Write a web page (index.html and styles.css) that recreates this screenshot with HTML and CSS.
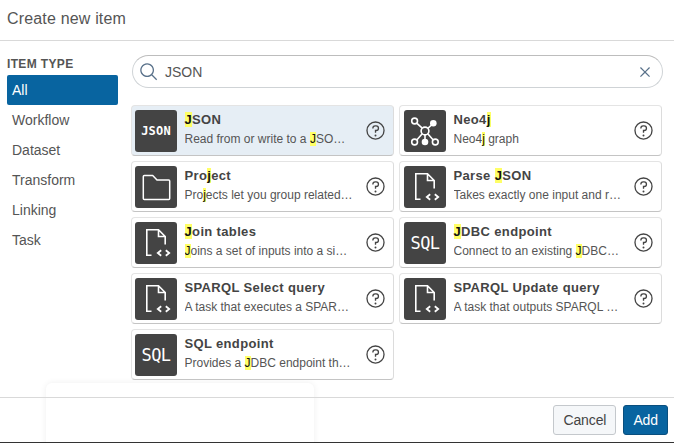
FILE: index.html
```html
<!DOCTYPE html>
<html lang="en">
<head>
<meta charset="utf-8">
<title>Create new item</title>
<link rel="stylesheet" href="styles.css">
</head>
<body>
<svg class="defs" width="0" height="0" aria-hidden="true">
  <symbol id="help" viewBox="0 0 32 32"><path d="M16,2A14,14,0,1,0,30,16,14,14,0,0,0,16,2Zm0,26A12,12,0,1,1,28,16,12,12,0,0,1,16,28Z"/><circle cx="16" cy="23.5" r="1.5"/><path d="M17,8H15.5A4.49,4.49,0,0,0,11,12.5V13h2v-.5A2.5,2.5,0,0,1,15.5,10H17a2.5,2.5,0,0,1,0,5H15v4.5h2V17a4.5,4.5,0,0,0,0-9Z"/></symbol>
  <symbol id="doc" viewBox="0 0 42 42"><path fill="none" stroke="#fff" stroke-width="1.6" d="M16.5 33.2H11.8V7.8H23.5L30.2 14.5V22.5M23.5 7.8V14.5H30.2"/><path fill="none" stroke="#fff" stroke-width="1.8" d="M26.2 28.2 22.8 31 26.2 33.8M30.8 28.2 34.2 31 30.8 33.8"/></symbol>
  <symbol id="folder" viewBox="0 0 42 42"><path fill="none" stroke="#fff" stroke-width="1.5" stroke-linejoin="round" d="M8.3 10.5Q8.3 9.5 9.3 9.5H17.7L22 14H33.7Q34.7 14 34.7 15V32.5Q34.7 33.5 33.7 33.5H9.3Q8.3 33.5 8.3 32.5Z"/></symbol>
  <symbol id="graph" viewBox="0 0 42 42"><g fill="none" stroke="#fff" stroke-width="1.6"><path d="M13 13.3 18.2 18.2M27.6 15 23.8 18.4M18.2 23.8 12.8 30M23.8 23.8 29.2 30M21 25V32"/><circle cx="21" cy="21" r="3.9"/><circle cx="10.6" cy="11" r="2.9"/><circle cx="10.6" cy="32" r="2.9"/><circle cx="31.3" cy="32" r="2.9"/></g><circle cx="29.3" cy="13.3" r="3.3" fill="#fff"/><circle cx="21" cy="32" r="3.3" fill="#fff"/></symbol>
</svg>
<div class="ghost"></div>
<div class="dialog">
  <header class="head">Create new item</header>
  <div class="body">
    <aside class="side">
      <div class="side-title">ITEM TYPE</div>
      <div class="side-item active">All</div>
      <div class="side-item">Workflow</div>
      <div class="side-item">Dataset</div>
      <div class="side-item">Transform</div>
      <div class="side-item">Linking</div>
      <div class="side-item">Task</div>
    </aside>
    <main class="main">
      <div class="search">
        <svg class="search-ico" viewBox="0 0 32 32"><path d="M29,27.5859l-7.5521-7.5521a11.0177,11.0177,0,1,0-1.4141,1.4141L27.5859,29ZM4,13a9,9,0,1,1,9,9A9.01,9.01,0,0,1,4,13Z"/></svg>
        <span class="search-text">JSON</span>
        <svg class="clear-ico" viewBox="0 0 32 32"><path d="M24 9.4L22.6 8 16 14.6 9.4 8 8 9.4 14.6 16 8 22.6 9.4 24 16 17.4 22.6 24 24 22.6 17.4 16 24 9.4z"/></svg>
      </div>
      <div class="grid">
        <div class="card selected">
          <div class="tile"><span class="tile-json">JSON</span></div>
          <div class="info"><div class="name"><mark>J</mark>SON</div><div class="desc">Read from or write to a <mark>J</mark>SO…</div></div>
          <svg class="help"><use href="#help"/></svg>
        </div>
        <div class="card">
          <div class="tile"><svg class="tile-ico"><use href="#graph"/></svg></div>
          <div class="info"><div class="name">Neo4<mark>j</mark></div><div class="desc">Neo4<mark>j</mark> graph</div></div>
          <svg class="help"><use href="#help"/></svg>
        </div>
        <div class="card">
          <div class="tile"><svg class="tile-ico"><use href="#folder"/></svg></div>
          <div class="info"><div class="name">Pro<mark>j</mark>ect</div><div class="desc">Pro<mark>j</mark>ects let you group related…</div></div>
          <svg class="help"><use href="#help"/></svg>
        </div>
        <div class="card">
          <div class="tile"><svg class="tile-ico"><use href="#doc"/></svg></div>
          <div class="info"><div class="name">Parse <mark>J</mark>SON</div><div class="desc">Takes exactly one input and r…</div></div>
          <svg class="help"><use href="#help"/></svg>
        </div>
        <div class="card">
          <div class="tile"><svg class="tile-ico"><use href="#doc"/></svg></div>
          <div class="info"><div class="name"><mark>J</mark>oin tables</div><div class="desc"><mark>J</mark>oins a set of inputs into a si…</div></div>
          <svg class="help"><use href="#help"/></svg>
        </div>
        <div class="card">
          <div class="tile"><span class="tile-sql">SQL</span></div>
          <div class="info"><div class="name"><mark>J</mark>DBC endpoint</div><div class="desc">Connect to an existing <mark>J</mark>DBC…</div></div>
          <svg class="help"><use href="#help"/></svg>
        </div>
        <div class="card">
          <div class="tile"><svg class="tile-ico"><use href="#doc"/></svg></div>
          <div class="info"><div class="name">SPARQL Select query</div><div class="desc">A task that executes a SPAR…</div></div>
          <svg class="help"><use href="#help"/></svg>
        </div>
        <div class="card">
          <div class="tile"><svg class="tile-ico"><use href="#doc"/></svg></div>
          <div class="info"><div class="name">SPARQL Update query</div><div class="desc">A task that outputs SPARQL …</div></div>
          <svg class="help"><use href="#help"/></svg>
        </div>
        <div class="card">
          <div class="tile"><span class="tile-sql">SQL</span></div>
          <div class="info"><div class="name">SQL endpoint</div><div class="desc">Provides a <mark>J</mark>DBC endpoint th…</div></div>
          <svg class="help"><use href="#help"/></svg>
        </div>
      </div>
    </main>
  </div>
  <footer class="foot">
    <button class="btn">Cancel</button>
    <button class="btn primary">Add</button>
  </footer>
</div>
<div class="edge"></div>
</body>
</html>
```
FILE: styles.css
```css
* { box-sizing: border-box; }
html, body { margin: 0; height: 100%; background: #fff; overflow: hidden; }
body { font-family: "Liberation Sans", Arial, sans-serif; color: #444; position: relative; }
.defs { position: absolute; }
.ghost { position: absolute; left: 46px; top: 383px; width: 268px; height: 70px; border-radius: 6px; box-shadow: 0 0 6px rgba(0,0,0,.07); }
.dialog { position: relative; height: 442px; display: flex; flex-direction: column; }
.head { height: 41px; padding: 9px 7px 0; font-size: 16px; letter-spacing: .17px; line-height: 20px; color: #555; border-bottom: 1px solid #d9d9d9; }
.body { height: 356px; display: flex; }
.side { width: 131px; padding: 17px 13px 0 7px; flex: none; }
.side-title { height: 17px; font-size: 12px; line-height: 13px; font-weight: 700; letter-spacing: .35px; color: #555; }
.side-item { height: 30px; line-height: 30px; padding-left: 5px; font-size: 14px; color: #555; border-radius: 2px; }
.side-item.active { background: #0864a0; color: #fff; }
.main { flex: 1; padding: 14px 11px 0 0; }
.search { margin-left: 1px; width: 531px; height: 33px; border: 1px solid #cfd3d6; border-top-color: #bdbdbd; border-radius: 17px; display: flex; align-items: center; padding: 0 7px 0 6px; }
.search-ico { width: 20px; height: 20px; fill: #59718a; flex: none; }
.search-text { flex: 1; margin-left: 6px; font-size: 14px; color: #555; }
.clear-ico { width: 20px; height: 20px; fill: #59718a; flex: none; }
.grid { margin-top: 17px; display: grid; grid-template-columns: 263px 263px; column-gap: 5px; row-gap: 5px; grid-auto-rows: 51px; }
.card { display: flex; align-items: center; padding: 0 7.5px 0 3px; background: #fff; border: 1px solid #e4e4e4; border-bottom-color: #c4c4c4; border-right-color: #dcdcdc; border-radius: 4px; }
.card:nth-child(even) { padding-left: 4px; }
.card.selected { background: #e6eef5; }
.tile { width: 42px; height: 42px; flex: none; border-radius: 3px; background: #444; color: #fff; display: flex; align-items: center; justify-content: center; }
.tile-ico { width: 42px; height: 42px; display: block; }
.tile-json { font-family: "DejaVu Sans Mono", monospace; font-weight: 700; font-size: 12px; letter-spacing: .2px; }
.tile-sql { font-family: "DejaVu Sans Mono", monospace; font-size: 17px; letter-spacing: -.5px; }
.info { flex: 1; min-width: 0; padding: 0 0 2px 7.5px; }
.name { font-size: 13px; line-height: 16px; font-weight: 700; letter-spacing: .35px; color: #444; white-space: nowrap; }
.desc { margin-top: 3px; font-size: 12px; line-height: 16px; color: #555; white-space: nowrap; overflow: hidden; }
mark { background: #ffff66; color: #111; }
.help { width: 21px; height: 21px; fill: #444; flex: none; }
.foot { height: 45px; display: flex; justify-content: flex-end; align-items: flex-start; padding: 7px 6px 0 0; gap: 7px; border-top: 1px solid #d9d9d9; }
.btn { height: 30px; padding: 0 9px; font: 14px "Liberation Sans", Arial, sans-serif; letter-spacing: -.1px; color: #444; background: #f5f7f9; border: 1px solid #c4c8cc; border-radius: 3px; }
.btn.primary { background: #0864a0; border-color: #0a4f7e; color: #fff; }
.edge { height: 1px; background: #333; }
```
